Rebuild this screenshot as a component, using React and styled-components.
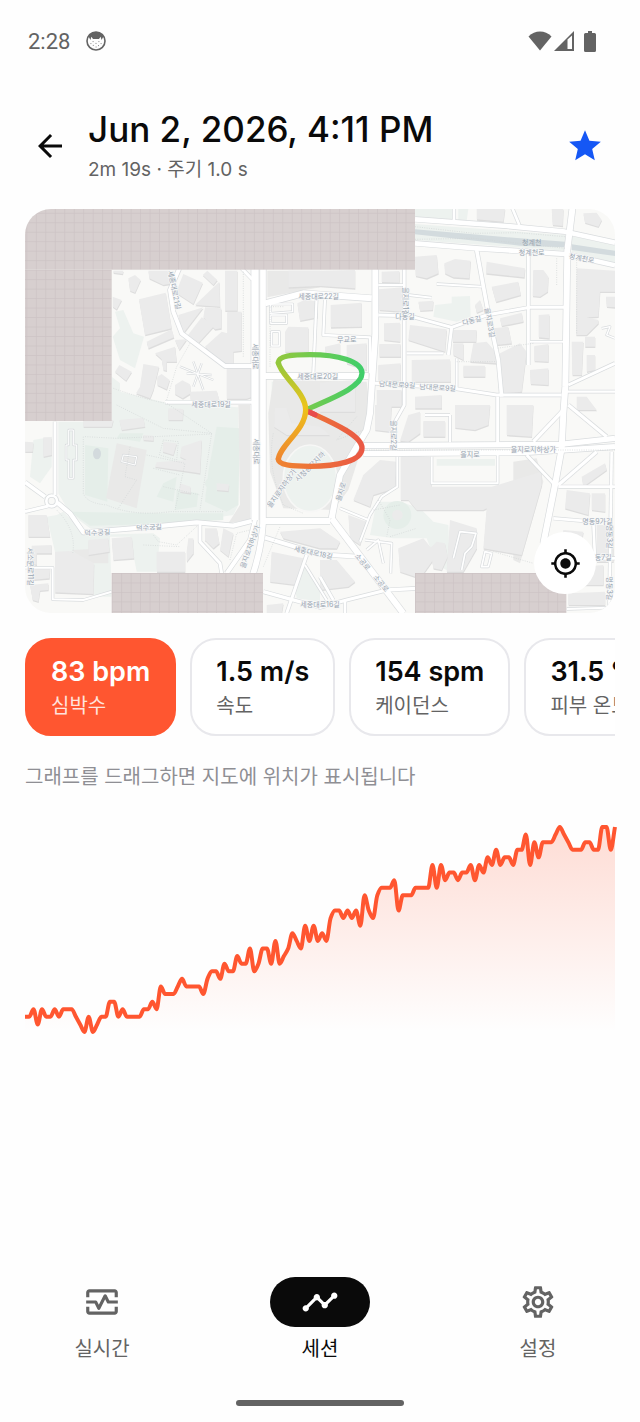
import React, { useState } from "react";
import styled, { createGlobalStyle } from "styled-components";
import {
  MdArrowBack,
  MdMyLocation,
  MdOutlineMonitorHeart,
  MdOutlineSettings,
  MdStar,
  MdTimeline,
} from "react-icons/md";

const GlobalStyle = createGlobalStyle`
  * {
    box-sizing: border-box;
  }
  body {
    margin: 0;
    background-color: #fefefe;
    color: #0a0a0a;
    font-family: Inter, "Noto Sans CJK KR", sans-serif;
  }
  button {
    font: inherit;
    color: inherit;
    cursor: pointer;
  }
`;

const Screen = styled.div`
  display: flex;
  flex-direction: column;
  min-height: 100vh;
`;
const StatusBar = styled.div`
  display: flex;
  align-items: center;
  justify-content: space-between;
  height: 82px;
  padding: 0 44px 0 28px;
  color: #636363;
  font-family: Roboto, sans-serif;
  font-size: 22px;
`;
const StatusGroup = styled.div`
  display: flex;
  align-items: center;
  gap: ${(props) => props.$gap}px;
`;
const Header = styled.header`
  display: flex;
  align-items: center;
  gap: 20px;
  padding: 23px 36px 22px 32px;
`;
const HeaderText = styled.div`
  flex: 1;
  min-width: 0;
`;
const Title = styled.h1`
  margin: 0;
  font-size: 35px;
  font-weight: 500;
  line-height: 48px;
`;
const Subtitle = styled.p`
  margin: 0;
  color: #636363;
  font-size: 19px;
  line-height: 34px;
`;
const IconButton = styled.button`
  display: flex;
  padding: 0;
  border: 0;
  background: none;
  color: ${(props) => props.$color || "inherit"};
  font-size: ${(props) => props.$size}px;
`;
const Content = styled.main`
  flex: 1;
  padding: 0 25px;
`;
const MapCard = styled.section`
  position: relative;
  overflow: hidden;
  border-radius: 26px;

  svg {
    display: block;
  }
`;
const RecenterButton = styled.button`
  position: absolute;
  right: 19px;
  bottom: 19px;
  display: flex;
  align-items: center;
  justify-content: center;
  width: 62px;
  height: 62px;
  padding: 0;
  border: 0;
  border-radius: 50%;
  background-color: #ffffff;
  font-size: 31px;
`;
const MetricList = styled.div`
  display: flex;
  gap: 14px;
  margin-top: 25px;
  overflow: hidden;
`;
const Metric = styled.button`
  flex: none;
  height: 98px;
  padding: 0 24px;
  border: 2px solid ${(props) => (props.$active ? "#ff5630" : "#e8e8ec")};
  border-radius: 26px;
  background-color: ${(props) => (props.$active ? "#ff5630" : "#ffffff")};
  color: ${(props) => (props.$active ? "#ffffff" : "#0a0a0a")};
  text-align: left;
  white-space: nowrap;
`;
const MetricValue = styled.span`
  display: block;
  font-size: 27px;
  font-weight: 600;
  line-height: 38px;
`;
const MetricLabel = styled.span`
  display: block;
  color: ${(props) => (props.$active ? "#ffe3dc" : "#636363")};
  font-size: 20px;
  line-height: 30px;
`;
const Hint = styled.p`
  margin: 25px 0 30px;
  color: #8f8f94;
  font-size: 20px;
  line-height: 32px;
`;
const ChartSvg = styled.svg`
  display: block;
  width: 100%;
  overflow: visible;
`;
const TabBar = styled.nav`
  display: grid;
  grid-template-columns: repeat(3, 1fr);
  padding: 0 0 36px;
  margin: 0 -7px;
`;
const Tab = styled.button`
  display: flex;
  flex-direction: column;
  align-items: center;
  gap: 7px;
  padding: 0;
  border: 0;
  background: none;
  color: ${(props) => (props.$active ? "#0a0a0a" : "#636363")};
  font-size: 20px;
  line-height: 30px;
`;
const TabIcon = styled.span`
  display: flex;
  align-items: center;
  justify-content: center;
  width: 100px;
  height: 50px;
  border-radius: 25px;
  background-color: ${(props) => (props.$active ? "#0a0a0a" : "transparent")};
  color: ${(props) => (props.$active ? "#ffffff" : "inherit")};
  font-size: 38px;
`;
const HomeIndicator = styled.div`
  align-self: center;
  width: 168px;
  height: 6px;
  margin-bottom: 16px;
  border-radius: 3px;
  background-color: #636363;
`;

// Map geometry, three units per pixel
const parks = [
  "278,410 300,385 285,335 310,330 340,400 372,410 345,505 300,480",
  "275,530 300,550 300,575 440,608 655,622 655,915 640,945 540,960 380,975 210,985 150,940 115,880 115,665 275,665",
  "1295,290 1350,288 1352,350 1310,365 1240,350 1245,315 1295,310",
  "1185,27 1300,27 1300,58 1185,50",
  "1315,27 1345,27 1340,62 1315,60",
  "1185,72 1635,105 1635,152 1185,120",
  "1655,108 1785,135 1785,190 1655,155",
  "110,945 130,935 200,1005 400,1000 420,1015 410,1115 350,1115 330,1010 270,1010 275,1190 222,1190 220,1090 105,1055 80,950",
  "820,1135 860,1095 900,1175 900,1205 830,1195",
  "1070,905 1140,905 1200,925 1240,965 1285,975 1290,1115 1250,1095 1220,1015 1120,1015 1050,1005",
  "1250,777 1425,777 1425,797 1250,797",
  "40,720 95,710 95,800 60,850 30,830",
  "755,545 795,545 795,620 755,620",
];
const groves = [
  "195,735 265,745 262,905 195,885",
  "590,680 660,685 655,915 620,935 555,905 565,815",
  "150,935 400,940 610,940 610,960 380,973 210,977",
  "430,850 470,830 460,905 410,890",
  "300,700 370,700 360,725 290,715",
  "470,870 535,880 530,920 465,930",
];
const yards = [
  "290,730 380,750 350,925 258,895",
  "655,615 690,615 690,960 625,970 660,915",
  "742,212 900,212 900,262 742,292",
  "745,640 760,540 1040,545 1050,625 1020,760 985,870 940,930 790,925 750,815",
  "155,1050 265,1045 265,1090 205,1090",
  "1480,785 1550,775 1570,845 1500,1090 1480,1080",
];
const buildings = [
  "325,235 345,225 362,240 345,278 330,272",
  "357,298 437,278 455,385 375,405",
  "385,212 450,212 470,235 460,250 430,255 388,235",
  "490,222 548,248 520,312 468,278",
  "548,225 562,212 592,240 580,255",
  "615,212 652,212 652,332 615,332",
  "598,245 600,320 525,315",
  "475,345 550,322 490,400",
  "555,322 604,325 604,385 585,388 550,352",
  "545,352 585,375 530,435 500,410",
  "622,335 665,335 665,452 640,455 640,492 605,490 555,440 605,395 622,400",
  "278,290 305,300 290,328 278,320",
  "380,425 455,388 462,412 385,445",
  "465,420 500,418 478,450",
  "405,460 465,440 470,485 440,485 440,512 430,510 425,478",
  "370,492 417,500 400,570 390,595 348,580 360,560",
  "412,530 425,522 449,540 440,568 412,555",
  "465,555 487,541 510,553 512,580 488,595 465,582",
  "510,575 590,572 598,600 512,605",
  "298,495 335,515 318,542 285,515",
  "620,505 697,505 697,590 680,596 620,596",
  "795,395 805,380 865,382 865,455 795,455",
  "805,212 900,212 1005,210 1005,265 900,258 805,262",
  "832,310 858,298 892,305 892,352 840,362",
  "280,212 310,212 308,222 280,218",
  "1185,170 1250,165 1255,220 1220,235 1187,228",
  "1273,190 1305,177 1352,182 1348,235 1300,232 1275,220",
  "1400,185 1515,205 1513,232 1398,220",
  "1415,260 1495,245 1502,285 1428,306",
  "1540,210 1570,210 1585,230 1583,275 1560,290 1538,288",
  "1670,205 1785,212 1785,275 1740,275 1735,350 1700,352 1735,360 1735,370 1700,405 1668,405",
  "1556,345 1588,343 1588,415 1556,412",
  "1543,438 1585,432 1585,485 1543,483",
  "1530,510 1585,505 1585,555 1532,552",
  "1370,27 1455,27 1450,65 1370,58",
  "1595,27 1630,27 1628,78 1598,75",
  "1690,40 1730,38 1745,60 1735,80 1695,68",
  "1075,268 1150,262 1150,335 1078,330",
  "1085,215 1138,213 1138,248 1085,246",
  "1092,370 1140,368 1140,425 1092,420",
  "1078,432 1142,432 1142,470 1078,470",
  "1170,375 1280,388 1275,455 1165,420",
  "1300,390 1370,390 1368,425 1298,425",
  "1175,480 1290,478 1292,545 1175,545",
  "1330,497 1395,497 1395,530 1330,530",
  "1360,430 1400,425 1430,460 1430,490 1350,485",
  "1300,430 1330,430 1330,480 1300,465",
  "1440,460 1500,430 1520,455 1505,575 1450,580",
  "1440,355 1505,338 1510,365 1445,378",
  "1420,385 1465,380 1475,430 1428,435",
  "1655,425 1690,425 1685,525 1657,525",
  "1695,410 1725,410 1725,440 1695,440",
  "1700,465 1725,465 1725,510 1700,515",
  "1075,495 1142,490 1142,545 1075,540",
  "932,315 1025,308 1025,380 932,382",
  "915,440 960,430 960,470 915,470",
  "980,435 1040,430 1040,510 980,490",
  "900,548 1005,540 1005,635 900,635",
  "1185,590 1265,585 1265,625 1185,625",
  "1070,570 1145,570 1145,620 1070,620",
  "1195,305 1240,302 1238,330 1200,332",
  "1758,290 1785,290 1785,322 1760,320",
  "1365,315 1380,300 1390,330 1370,338",
  "1670,590 1700,590 1730,630 1670,630",
  "298,660 370,653 375,680 305,690",
  "445,625 490,627 488,660 445,660",
  "190,660 280,660 275,680 190,680",
  "430,725 470,730 460,765 428,755",
  "485,740 545,720 540,820 405,800 410,787 500,780 480,770",
  "370,705 400,707 400,722 370,720",
  "590,850 627,853 625,873 590,870",
  "480,850 512,860 512,880 480,875",
  "70,712 95,712 95,765 70,770",
  "15,725 40,727 38,755 15,755",
  "25,945 80,945 90,1010 25,1010",
  "35,1037 95,1035 95,1060 50,1060 50,1095 35,1090",
  "30,1105 90,1107 88,1135 32,1140",
  "30,1155 85,1150 85,1170 60,1172 55,1205 38,1200",
  "105,1055 155,1053 222,1090 220,1182 105,1177",
  "205,1020 265,1015 268,1055 205,1065",
  "275,1015 335,1010 342,1075 280,1080",
  "410,1055 495,1055 495,1115 410,1115",
  "505,1015 520,1015 520,1060 500,1085 500,1055",
  "555,985 590,985 598,1030 580,1045 555,1020",
  "610,985 640,1000 625,1070 600,1050",
  "755,1055 850,1075 830,1155 750,1145",
  "780,995 900,985 955,1025 950,1045 900,1045 790,1015",
  "765,625 800,625 815,670 900,680 930,705 800,705 762,680",
  "1065,615 1115,615 1110,695 1065,690",
  "1165,645 1200,635 1200,700 1165,725 1140,722",
  "1210,663 1275,663 1275,710 1210,710",
  "1305,615 1410,615 1405,675 1365,690 1305,683",
  "1460,615 1540,615 1535,710 1460,705",
  "1030,825 1080,780 1130,785 1125,865 1060,885 1050,920 1000,900",
  "1142,765 1235,770 1235,860 1415,860 1565,815 1565,855 1505,1065 1390,1045 1400,925 1390,930 1190,930 1165,900 1142,900",
  "1290,960 1370,985 1370,1045 1330,1115 1280,1115",
  "1230,1045 1250,1025 1275,1030 1283,1070 1265,1110 1240,1105",
  "1135,1045 1210,1015 1250,1065 1200,1135 1140,1115",
  "1640,870 1710,880 1705,945 1635,925",
  "1685,830 1755,790 1760,810 1690,860",
  "1730,975 1780,975 1780,1085 1730,1085",
  "900,1080 950,1080 1005,1145 985,1160 900,1170",
  "985,945 1040,965 1020,1035 990,1015",
  "900,985 960,1025 950,1045 900,1040",
  "1645,1180 1755,1175 1755,1215 1645,1215",
  "1640,1105 1750,1095 1750,1155 1640,1155",
  "1630,990 1690,995 1685,1025 1630,1020",
  "1715,880 1755,880 1755,935 1715,930",
  "740,1215 790,1210 785,1239 740,1239",
];
const roads = [
  { d: "M705,200 V960", w: 22 },
  { d: "M729,200 V970 Q725,1050 690,1150 L670,1240", w: 17 },
  { d: "M706,955 L690,1020 L620,1120", w: 12 },
  { d: "M478,205 L450,270 L460,335 L485,400 L615,498 H700", w: 12 },
  { d: "M665,205 L697,238", w: 9 },
  { d: "M735,310 L850,280 L1055,295", w: 18 },
  { d: "M735,528 H1045", w: 18 },
  { d: "M435,607 H705", w: 9 },
  { d: "M890,290 L880,520", w: 7 },
  { d: "M915,295 L910,405 L1050,412 V520", w: 7 },
  { d: "M1185,58 L1460,78 L1635,95 L1785,128", w: 14 },
  { d: "M1185,130 L1370,145 L1635,162 L1785,196", w: 14 },
  { d: "M1658,20 L1642,150 L1636,560 L1630,640 L1625,745 L1605,855 L1570,1030", w: 18 },
  { d: "M1302,20 V62", w: 8 },
  { d: "M1475,20 L1498,75", w: 8 },
  { d: "M1066,205 V400 L1050,640 L1040,690 L960,825 L935,955", w: 18 },
  { d: "M1153,205 V615 L1125,665 V740", w: 8 },
  { d: "M1370,150 L1405,340 L1435,480 L1445,590", w: 11 },
  { d: "M1525,160 V495", w: 9 },
  { d: "M1075,345 L1165,347 L1295,382 L1400,345 L1530,322 L1635,322", w: 9 },
  { d: "M1295,382 L1285,465", w: 9 },
  { d: "M1160,460 H1270", w: 7 },
  { d: "M1065,550 L1300,565 L1430,585 H1625", w: 9 },
  { d: "M1640,575 H1785", w: 7 },
  { d: "M1530,425 H1630", w: 6 },
  { d: "M1645,555 L1785,490", w: 9 },
  { d: "M1250,252 L1385,260", w: 6 },
  { d: "M1075,255 H1150", w: 6 },
  { d: "M1165,285 L1235,293", w: 6 },
  { d: "M1310,475 V565", w: 6 },
  { d: "M1433,590 V730", w: 9 },
  { d: "M1785,415 L1760,405 L1770,380 L1745,385", w: 4 },
  { d: "M15,847 L75,890", w: 11 },
  { d: "M15,935 L85,918", w: 9 },
  { d: "M105,665 V885", w: 9 },
  { d: "M112,908 L150,940 L190,997 L400,980 L530,967 L640,977 L695,963", w: 13 },
  { d: "M540,970 V1025 L600,1090 L605,1120", w: 9 },
  { d: "M735,963 H930", w: 18 },
  { d: "M735,1013 L900,1063 L1015,1070", w: 12 },
  { d: "M860,1065 L800,1240", w: 9 },
  { d: "M855,1095 L920,1200", w: 6 },
  { d: "M15,1103 H98 V1198 L190,1200 L275,1175", w: 6 },
  { d: "M730,1175 L900,1222 L980,1200 L1100,1170 L1190,1165", w: 10 },
  { d: "M975,1200 V1240 M900,1130 L940,1200", w: 8 },
  { d: "M1030,737 L1620,733 L1785,715", w: 16 },
  { d: "M1030,761 L1520,757 L1785,740", w: 16 },
  { d: "M935,955 L1150,1240", w: 18 },
  { d: "M1290,645 V727 M1215,645 H1290", w: 6 },
  { d: "M1132,770 V860 L1085,890 L1050,945 L1020,1025", w: 6 },
  { d: "M1235,770 V850 H1433 V765", w: 6 },
  { d: "M1520,765 L1605,855", w: 9 },
  { d: "M1540,725 L1630,630", w: 10 },
  { d: "M1645,615 L1760,710", w: 10 },
  { d: "M1615,855 L1730,755", w: 10 },
  { d: "M1615,860 H1785", w: 8 },
  { d: "M1775,755 L1768,1220", w: 8 },
  { d: "M1600,955 L1720,965 L1725,1075 H1785", w: 8 },
  { d: "M960,925 L1045,960", w: 6 },
  { d: "M1640,1227 L1760,1223", w: 6 },
  { d: "M1300,1075 L1320,995 L1368,1000 L1355,1040 L1335,1060 L1325,1110", w: 5 },
  { d: "M1035,1020 L1115,1030 L1112,1120 M1040,1050 L1075,1020 L1090,1090", w: 5 },
  { d: "M1385,1100 L1395,1055 L1415,1060 L1405,1100 Z", w: 5 },
  { d: "M752,312 H818 V335 L752,340 Z", w: 4 },
  { d: "M752,345 H800 V370 H752 Z M755,395 H778 V438 H755 Z", w: 4 },
  { d: "M480,500 L580,540 M520,485 L550,570 M545,490 L520,560 M500,520 L575,525", w: 3 },
  { d: "M146,690 H160 V735 H170 V780 H160 V835 H146 V780 H138 V735 H146 Z", w: 3 },
  { d: "M310,765 L350,770 L345,795 L305,785 Z", w: 3 },
];
const footpaths = [
  "M670,215 V470 M280,565 Q380,600 440,610 L575,700 L540,930",
  "M190,710 V880 Q200,910 260,915 Q340,950 450,935 H610",
  "M195,710 L290,715 L575,702",
  "M290,615 L430,685 L575,700",
  "M380,765 L495,790 L465,930 M400,805 L480,825 M430,860 L540,885",
  "M330,740 L315,830 L350,840 L295,925",
  "M430,720 L475,725 L470,780 L418,765 Z",
  "M110,930 Q170,990 158,1060",
  "M400,1005 L415,1025 L470,1035 L535,975 M370,1035 L480,1040",
  "M790,320 H750 V500 M510,430 L470,500 L440,600",
  "M1185,80 L1360,100 L1495,98 L1635,110 M1185,118 L1360,115 L1635,145",
  "M1610,175 V255 M1670,180 V400 M1540,430 L1430,445 M1310,485 H1430",
  "M1040,750 H1785",
  "M760,700 Q740,800 790,915 L850,940 M1010,650 L950,720 L1030,690",
  "M1075,900 L1110,960 L1100,1010 M1060,930 L1140,915 M1110,1010 L1190,985",
  "M1420,1055 L1540,1090 M730,1100 L780,980 M630,1080 L650,1000 L690,990",
];
const mapLabels = [
  { x: 896, y: 288, text: "세종대로22길" },
  { x: 893, y: 530, text: "세종대로20길" },
  { x: 980, y: 418, text: "무교로" },
  { x: 573, y: 612, text: "세종대로19길" },
  { x: 463, y: 270, r: 78, text: "세종대로21길" },
  { x: 707, y: 470, r: 90, text: "세종대로" },
  { x: 709, y: 755, r: 90, text: "세종대로" },
  { x: 1535, y: 128, text: "청계천", dark: true },
  { x: 1535, y: 157, text: "청계천로" },
  { x: 1685, y: 175, r: 10, text: "청계천로" },
  { x: 1155, y: 305, r: 90, text: "을지로1길" },
  { x: 1155, y: 348, text: "다동길" },
  { x: 1355, y: 362, r: -14, text: "다동길" },
  { x: 1409, y: 368, r: 80, text: "을지로3길" },
  { x: 1131, y: 554, r: 3, text: "남대문로9길" },
  { x: 1253, y: 563, r: 3, text: "남대문로9길" },
  { x: 1121, y: 706, r: 90, text: "을지로2길" },
  { x: 1350, y: 763, text: "을지로" },
  { x: 1540, y: 749, text: "을지로지하상가" },
  { x: 963, y: 875, r: -72, text: "을지로" },
  { x: 1028, y: 1086, r: 50, text: "소공로" },
  { x: 1083, y: 1150, r: 50, text: "소공로" },
  { x: 232, y: 998, r: -3, text: "덕수궁길" },
  { x: 387, y: 982, r: -3, text: "덕수궁길" },
  { x: 880, y: 1058, r: 12, text: "세종대로18길" },
  { x: 690, y: 1040, r: -70, text: "을지로지하상가" },
  { x: 785, y: 865, r: -55, text: "을지로지하상가" },
  { x: 870, y: 800, r: -45, text: "시청광장지하" },
  { x: 1732, y: 965, text: "명동9가길" },
  { x: 1767, y: 1010, r: 90, text: "명동3길" },
  { x: 1740, y: 1071, text: "명동7길" },
  { x: 1767, y: 1165, r: 90, text: "명동3길" },
  { x: 900, y: 1212, text: "세종대로16길" },
  { x: 30, y: 1100, r: 90, text: "서소문로11길" },
];
const missingTiles = [
  { x: 15, y: 27, w: 1170, h: 182 },
  { x: 15, y: 209, w: 260, h: 454 },
  { x: 275, y: 1119, w: 454, h: 120 },
  { x: 1185, y: 1119, w: 454, h: 120 },
];

const CityMap = () => (
  <svg viewBox="15 27 1770 1212" width="100%" role="img" aria-label="지도">
    <defs>
      <pattern id="grid" x="275" y="209" width="28.4375" height="28.4375" patternUnits="userSpaceOnUse">
        <rect width="29" height="29" fill="#d7cfcf" />
        <path d="M0,1 H29 M1,0 V29" stroke="#cbc2c3" strokeWidth="2.5" />
      </pattern>
      <linearGradient id="routeTop" gradientUnits="userSpaceOnUse" x1="770" y1="0" x2="1030" y2="0">
        <stop offset="0" stopColor="#93c83d" />
        <stop offset="1" stopColor="#3fce6b" />
      </linearGradient>
      <linearGradient id="routeMiddle" gradientUnits="userSpaceOnUse" x1="0" y1="490" x2="0" y2="780">
        <stop offset="0" stopColor="#93c83d" />
        <stop offset="0.45" stopColor="#edc41a" />
        <stop offset="1" stopColor="#ef8430" />
      </linearGradient>
      <linearGradient id="routeBottom" gradientUnits="userSpaceOnUse" x1="770" y1="0" x2="1030" y2="0">
        <stop offset="0" stopColor="#ef8430" />
        <stop offset="1" stopColor="#ea5844" />
      </linearGradient>
    </defs>
    <rect x="15" y="27" width="1770" height="1212" fill="#f9f9f7" />
    <g fill="#edf2ef">
      {parks.map((points) => (
        <polygon key={points} points={points} />
      ))}
    </g>
    <g fill="#e5eee9">
      {groves.map((points) => (
        <polygon key={points} points={points} />
      ))}
      <circle cx="1132" cy="945" r="42" />
      <circle cx="570" cy="850" r="15" />
      <circle cx="572" cy="885" r="15" />
    </g>
    <g fill="#e9e9e8">
      {yards.map((points) => (
        <polygon key={points} points={points} />
      ))}
    </g>
    <ellipse cx="870" cy="835" rx="80" ry="100" fill="#edf2ef" stroke="#f7f7f6" strokeWidth="5" />
    <ellipse cx="231" cy="761" rx="12" ry="17" fill="#d3dadd" />
    <path
      d="M1185,88 L1500,115 L1635,125 V142 L1500,137 L1185,103 Z M1655,133 L1785,152 V168 L1655,150 Z"
      fill="#d3dbde"
    />
    <g fill="#dddddd" transform="translate(1 4)">
      {buildings.map((points) => (
        <polygon key={points} points={points} />
      ))}
    </g>
    <g fill="#ebebeb">
      {buildings.map((points) => (
        <polygon key={points} points={points} />
      ))}
      <circle cx="1132" cy="945" r="16" />
    </g>
    <g fill="none" stroke="#d9dcde" strokeLinejoin="round">
      {roads.map((road) => (
        <path key={road.d} d={road.d} strokeWidth={road.w + 4} />
      ))}
      <circle cx="95" cy="903" r="16" strokeWidth="13" />
    </g>
    <g fill="none" stroke="#ffffff" strokeLinejoin="round">
      {roads.map((road) => (
        <path key={road.d} d={road.d} strokeWidth={road.w} />
      ))}
      <circle cx="95" cy="903" r="16" strokeWidth="8" />
    </g>
    <g fill="none" stroke="#d0d4d5" strokeWidth="2" strokeDasharray="3 4">
      {footpaths.map((d) => (
        <path key={d} d={d} />
      ))}
    </g>
    <g
      fill="#98a4b0"
      stroke="#f7f8f8"
      strokeWidth="4"
      paintOrder="stroke"
      fontSize="21"
      textAnchor="middle"
      dominantBaseline="central"
    >
      {mapLabels.map((label) => (
        <text
          key={`${label.x}-${label.y}`}
          transform={`translate(${label.x} ${label.y}) rotate(${label.r || 0})`}
          stroke={label.dark ? "none" : undefined}
        >
          {label.text}
        </text>
      ))}
    </g>
    {missingTiles.map((tile) => (
      <rect key={`${tile.x}-${tile.y}`} x={tile.x} y={tile.y} width={tile.w} height={tile.h} fill="url(#grid)" />
    ))}
    <g fill="none" strokeWidth="16" strokeLinecap="round" strokeLinejoin="round">
      <path
        d="M858,630 C915,602 1026,565 1026,520 C1026,482 950,464 870,464 C815,464 775,468 775,488"
        stroke="url(#routeTop)"
      />
      <path
        d="M775,777 C775,795 815,799 870,799 C950,799 1026,784 1026,744 C1026,705 930,665 865,635"
        stroke="url(#routeBottom)"
      />
      <path d="M865,635 L885,644" stroke="#e84c4c" />
      <path d="M775,488 C780,525 857,575 857,630 C857,690 780,735 775,777" stroke="url(#routeMiddle)" />
    </g>
  </svg>
);

const MIN_BPM = 56;
const MAX_BPM = 83;
const heartRates = [
  58, 58, 59, 57, 59, 58, 58, 59, 58, 59, 59, 59, 58, 57, 56, 58, 56, 57, 58, 58,
  60, 60, 58, 59, 58, 58, 58, 58, 59, 59, 60, 59, 62, 61, 61, 61, 62, 63, 62, 62,
  62, 62, 61, 63, 64, 64, 63, 65, 64, 64, 66, 65, 65, 67, 64, 65, 67, 67, 65, 68,
  65, 66, 67, 69, 68, 67, 70, 68, 70, 68, 69, 68, 71, 72, 72, 71, 72, 71, 72, 70,
  74, 72, 71, 74, 75, 75, 75, 76, 72, 74, 74, 74, 75, 75, 75, 75, 78, 75, 78, 76,
  77, 77, 76, 77, 77, 78, 76, 78, 77, 79, 78, 80, 78, 79, 79, 78, 80, 80, 82, 78,
  81, 79, 81, 81, 81, 82, 83, 82, 81, 80, 80, 80, 81, 81, 80, 80, 83, 83, 80, 83,
];

// Monotone cubic line through the points
const smoothPath = (points) => {
  const slopes = points.slice(1).map((p, i) => (p.y - points[i].y) / (p.x - points[i].x));
  const tangents = points.map((_, i) => {
    const before = slopes[i - 1];
    const after = slopes[i];
    if (before === undefined) return after;
    if (after === undefined) return before;
    if (before * after <= 0) return 0;
    return (2 * before * after) / (before + after);
  });
  return points.reduce((d, p, i) => {
    if (i === 0) return `M${p.x},${p.y}`;
    const prev = points[i - 1];
    const third = (p.x - prev.x) / 3;
    return `${d} C${prev.x + third},${prev.y + third * tangents[i - 1]} ${p.x - third},${
      p.y - third * tangents[i]
    } ${p.x},${p.y}`;
  }, "");
};

const Chart = ({ values }) => {
  const top = 4;
  const bottom = 209;
  const points = values.map((value, i) => ({
    x: (590 * i) / (values.length - 1),
    y: bottom - ((value - MIN_BPM) * (bottom - top)) / (MAX_BPM - MIN_BPM),
  }));
  const line = smoothPath(points);

  return (
    <ChartSvg viewBox="0 0 590 214" role="img" aria-label="심박수">
      <defs>
        <linearGradient id="fill" gradientUnits="userSpaceOnUse" x1="0" y1={top} x2="0" y2={bottom}>
          <stop offset="0" stopColor="#ff5630" stopOpacity="0.2" />
          <stop offset="1" stopColor="#ff5630" stopOpacity="0" />
        </linearGradient>
      </defs>
      <path d={`${line} L590,${bottom} L0,${bottom} Z`} fill="url(#fill)" />
      <path d={line} fill="none" stroke="#ff5630" strokeWidth="4" strokeLinejoin="round" />
    </ChartSvg>
  );
};

const CatIcon = () => (
  <svg width="20" height="20" viewBox="0 0 20 20">
    <circle cx="10" cy="10" r="9" fill="none" stroke="#636363" strokeWidth="1.6" />
    <path d="M2.6,5.6 Q5.2,1 10,1 Q14.8,1 17.4,5.6 L15.6,9 L14.6,5.8 L13,8 H7 L5.4,5.8 L4.4,9 Z" fill="#636363" />
    <path
      d="M6.6,10.6 h1 M12.4,10.6 h1 M4.4,12.6 h1 M9.5,12.4 h1 M14.6,12.6 h1 M6.8,14.4 h1 M12,14.6 h1 M9.6,16 h1"
      stroke="#8a8a8a"
      strokeWidth="1"
    />
  </svg>
);
const WifiIcon = () => (
  <svg width="24" height="20" viewBox="0 0 24 20">
    <path d="M0.5,5.5 Q5.5,0.5 12,0.5 Q18.5,0.5 23.5,5.5 L12,19.5 Z" fill="#636363" />
  </svg>
);
const SignalIcon = () => (
  <svg width="20" height="20" viewBox="0 0 20 20">
    <path d="M0,20 L20,0 V20 Z M13.5,8.5 V18 H18 V4.5 Z" fill="#636363" fillRule="evenodd" />
  </svg>
);
const BatteryIcon = () => (
  <svg width="12" height="21" viewBox="0 0 12 21">
    <path d="M4,0 H8 V2 H10.5 Q12,2 12,3.5 V19.5 Q12,21 10.5,21 H1.5 Q0,21 0,19.5 V3.5 Q0,2 1.5,2 H4 Z" fill="#636363" />
  </svg>
);

const metrics = [
  { id: "heart", value: "83 bpm", label: "심박수" },
  { id: "speed", value: "1.5 m/s", label: "속도" },
  { id: "cadence", value: "154 spm", label: "케이던스" },
  { id: "skin", value: "31.5 °C", label: "피부 온도" },
];
const tabs = [
  { id: "live", label: "실시간", Icon: MdOutlineMonitorHeart },
  { id: "sessions", label: "세션", Icon: MdTimeline },
  { id: "settings", label: "설정", Icon: MdOutlineSettings },
];

const App = () => {
  const [metric, setMetric] = useState("heart");
  const [tab, setTab] = useState("sessions");

  return (
    <Screen>
      <GlobalStyle />
      <StatusBar>
        <StatusGroup $gap={16}>
          <span>2:28</span>
          <CatIcon />
        </StatusGroup>
        <StatusGroup $gap={10}>
          <StatusGroup $gap={2}>
            <WifiIcon />
            <SignalIcon />
          </StatusGroup>
          <BatteryIcon />
        </StatusGroup>
      </StatusBar>
      <Header>
        <IconButton $size={36} aria-label="뒤로">
          <MdArrowBack />
        </IconButton>
        <HeaderText>
          <Title>Jun 2, 2026, 4:11 PM</Title>
          <Subtitle>2m 19s · 주기 1.0 s</Subtitle>
        </HeaderText>
        <IconButton $size={38} $color="#1557f5" aria-label="즐겨찾기">
          <MdStar />
        </IconButton>
      </Header>
      <Content>
        <MapCard>
          <CityMap />
          <RecenterButton aria-label="현재 위치">
            <MdMyLocation />
          </RecenterButton>
        </MapCard>
        <MetricList>
          {metrics.map(({ id, value, label }) => (
            <Metric key={id} $active={metric === id} onClick={() => setMetric(id)}>
              <MetricValue>{value}</MetricValue>
              <MetricLabel $active={metric === id}>{label}</MetricLabel>
            </Metric>
          ))}
        </MetricList>
        <Hint>그래프를 드래그하면 지도에 위치가 표시됩니다</Hint>
        <Chart values={heartRates} />
      </Content>
      <TabBar>
        {tabs.map(({ id, label, Icon }) => (
          <Tab key={id} $active={tab === id} onClick={() => setTab(id)}>
            <TabIcon $active={tab === id}>
              <Icon />
            </TabIcon>
            {label}
          </Tab>
        ))}
      </TabBar>
      <HomeIndicator />
    </Screen>
  );
};

export default App;
